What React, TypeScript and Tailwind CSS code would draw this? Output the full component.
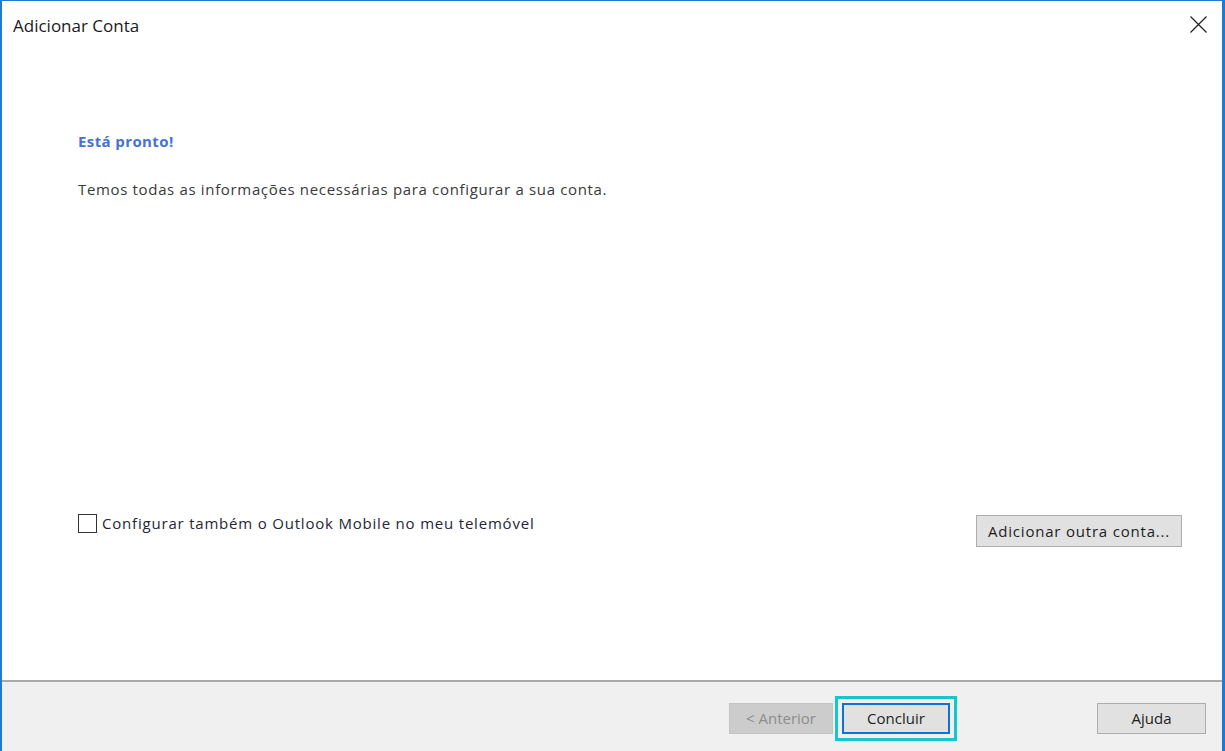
import React from "react";

export default function App() {
  const font = { fontFamily: '"Open Sans", "Noto Sans", "DejaVu Sans", sans-serif' };
  return (
    <div
      className="w-[1225px] h-[751px] box-border flex flex-col bg-white border-t border-l-2 border-r-[3px] border-[#1f7ad3] overflow-hidden"
      style={font}
    >
      {/* Title bar */}
      <div className="h-[48px] flex items-center justify-between pl-[11px] pr-[15px] shrink-0">
        <span className="text-[17px] text-[#1a1a1a] leading-none">Adicionar Conta</span>
        <svg width="17" height="17" viewBox="0 0 17 17" className="mb-[1px]">
          <path d="M0.5 0.5 L16.5 16.5 M16.5 0.5 L0.5 16.5" stroke="#1a1a1a" strokeWidth="1.1" fill="none" />
        </svg>
      </div>

      {/* Content */}
      <div className="flex-1 flex flex-col pl-[76px] pr-[40px]">
        <div className="mt-[82px] h-[20px] flex items-center text-[15px] font-bold tracking-[0.4px] text-[#4672d6]">
          Está pronto!
        </div>
        <div className="mt-[28px] h-[20px] flex items-center text-[15px] tracking-[0.66px] text-[#3a3a3a]">
          Temos todas as informações necessárias para configurar a sua conta.
        </div>
        <div className="mt-[315px] flex justify-between items-start">
          <label className="flex items-center h-[19px] gap-[5px]">
            <span className="w-[19px] h-[19px] border-[1.5px] border-[#333333] bg-white box-border" />
            <span className="text-[15px] tracking-[0.8px] text-[#262636]">Configurar também o Outlook Mobile no meu telemóvel</span>
          </label>
          <button className="mt-[1px] w-[206px] h-[32px] bg-[#e1e1e1] border border-[#adadad] text-[15px] tracking-[0.8px] text-[#1e1e1e] flex items-center justify-center">
            Adicionar outra conta...
          </button>
        </div>
      </div>

      {/* Footer */}
      <div className="h-[71px] shrink-0 border-t-2 border-[#a9a9a9] bg-[#f0f0f0] flex items-start justify-end pr-[16px] pt-[21px]">
        <button className="w-[104px] h-[31px] bg-[#cccccc] border border-[#c4c4c4] text-[15px] text-[#8d8d8d] flex items-center justify-center">
          &lt; Anterior
        </button>
        <button className="ml-[9px] w-[108px] h-[31px] bg-[#e1e1e1] border-2 border-[#0c74d4] text-[15px] text-[#1e1e1e] flex items-center justify-center outline-[3px] outline-solid outline-[#17c5cc] outline-offset-[4px]">
          Concluir
        </button>
        <button className="ml-[147px] w-[109px] h-[31px] bg-[#e1e1e1] border border-[#adadad] text-[15px] text-[#1e1e1e] flex items-center justify-center">
          Ajuda
        </button>
      </div>
    </div>
  );
}
